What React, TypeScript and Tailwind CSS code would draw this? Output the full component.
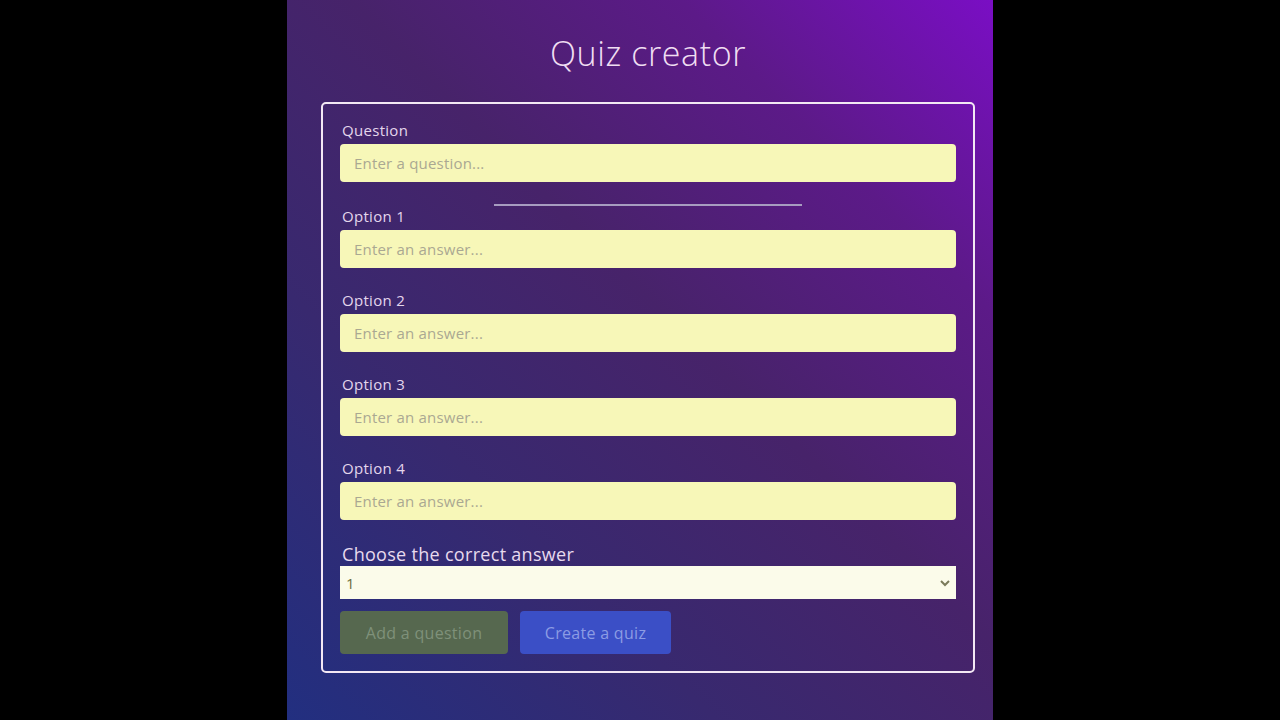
// Quiz creator form over a purple gradient panel.
const options = [1, 2, 3, 4]

function Field({ label, placeholder }: { label: string; placeholder: string }) {
  return (
    <div className="flex flex-col">
      <label className="h-5 pl-[2px] text-[15px] leading-5 tracking-[0.3px] text-[#e4d6ec]">
        {label}
      </label>
      <input
        disabled
        placeholder={placeholder}
        className="mt-1 h-[38px] w-full rounded-[4px] bg-[#f7f7b8] px-[14px] text-[15px] tracking-[0.2px] text-[#55555a] outline-none placeholder:text-[#aaa892]"
      />
    </div>
  )
}

export default function App() {
  return (
    <div className="flex min-h-screen w-full justify-center bg-black font-['Open_Sans',sans-serif]">
      <div className="flex h-[720px] w-[706px] flex-col items-center overflow-hidden bg-[linear-gradient(45deg,#222f80_0%,#38296f_30%,#47236a_55%,#5c1a88_78%,#7a0ec4_100%)] pl-[16px]">
        <h1 className="mt-[31px] text-[34px] font-light leading-[44px] tracking-[0.6px] text-[#f0def2]">
          Quiz creator
        </h1>
        <form className="mt-[27px] flex w-[654px] flex-col rounded-[5px] border-2 border-[#f3e8f4] px-[17px] pt-4 pb-[17px]">
          <Field label="Question" placeholder="Enter a question..." />
          <hr className="mx-auto mt-[22px] w-[308px] border-t-2 border-[#a79cc0]" />
          <div className="flex flex-col gap-[22px]">
            {options.map((n) => (
              <Field key={n} label={`Option ${n}`} placeholder="Enter an answer..." />
            ))}
          </div>
          <label className="mt-[23px] h-[23px] pl-[2px] text-[18px] leading-[23px] tracking-[0.3px] text-[#e8daee]">
            Choose the correct answer
          </label>
          <div className="relative h-[33px] w-full bg-[#fbfbea]">
            <span className="absolute left-[6px] top-[6px] text-[15px] text-[#6e6e40]">1</span>
            <svg
              className="absolute right-[5px] top-[11px]"
              width="12"
              height="12"
              viewBox="0 0 12 12"
              fill="none"
              stroke="#7a7a5a"
              strokeWidth="2"
            >
              <path d="M2 4l4 4 4-4" />
            </svg>
          </div>
          <div className="mt-3 flex gap-3">
            <button
              type="button"
              className="h-[43px] w-[168px] rounded-[4px] bg-[#56684f] text-[16px] tracking-[0.3px] text-[#7f917a]"
            >
              Add a question
            </button>
            <button
              type="button"
              className="h-[43px] w-[151px] rounded-[4px] bg-[#3b4fc6] text-[16px] tracking-[0.3px] text-[#8c9ce4]"
            >
              Create a quiz
            </button>
          </div>
        </form>
      </div>
    </div>
  )
}
